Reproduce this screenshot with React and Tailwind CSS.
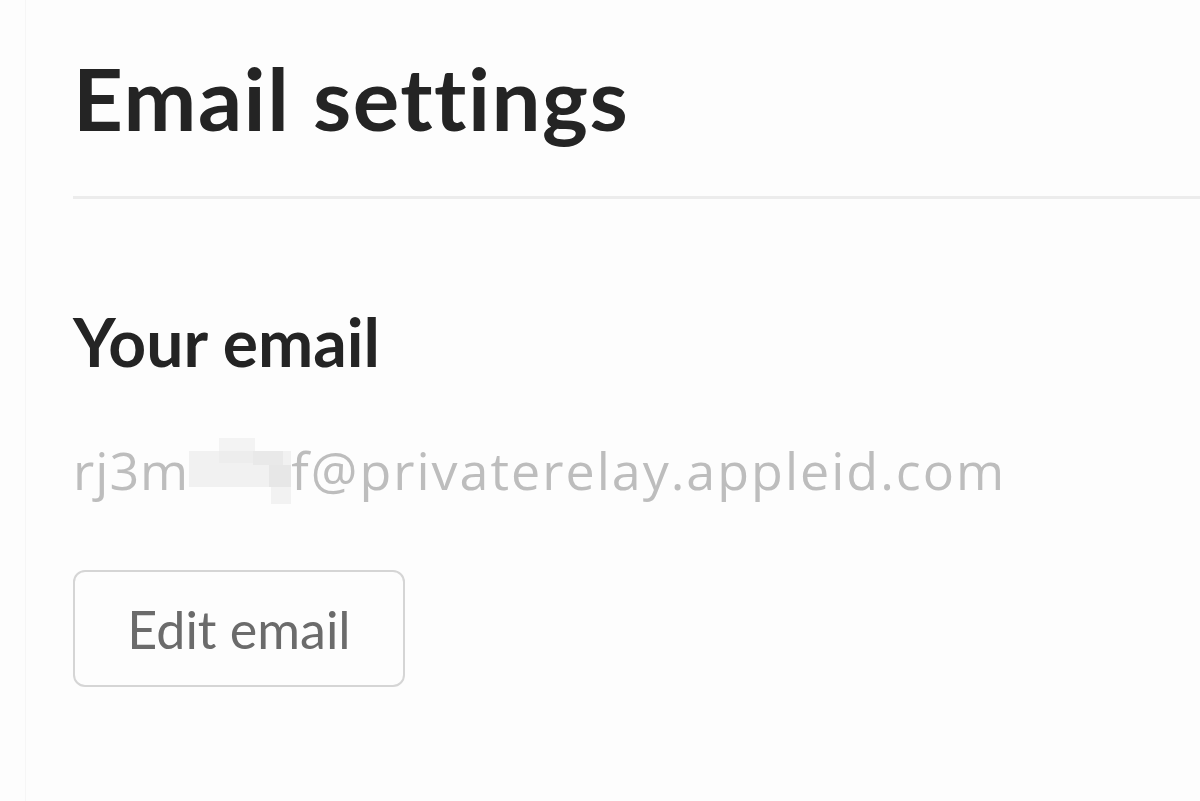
function Pixelated() {
  return (
    <svg width="102" height="66" viewBox="0 0 102 66" className="shrink-0 self-start mt-[0px]">
      <rect x="0" y="13" width="102" height="36" fill="#f1f1f1" />
      <rect x="30" y="0" width="36" height="14" fill="#f3f3f3" />
      <rect x="30" y="13" width="36" height="12" fill="#ededed" />
      <rect x="64" y="13" width="30" height="14" fill="#e9e9e9" />
      <rect x="80" y="27" width="22" height="22" fill="#e7e7e7" />
      <rect x="82" y="49" width="20" height="17" fill="#f2f2f2" />
    </svg>
  );
}

export default function App() {
  return (
    <div className="w-[1200px] h-[801px] bg-[#fdfdfd] overflow-hidden flex" style={{ fontFamily: "Lato, 'Liberation Sans', sans-serif" }}>
      <div className="w-[26px] shrink-0 border-r border-[#f6f6f6]" />
      <div className="flex-1 flex flex-col pl-[47px] pt-[48px]">
        <h1 className="text-[87px] leading-[100px] font-bold text-[#242424] tracking-[1.5px]">Email settings</h1>
        <div className="mt-[48px] h-[3px] bg-[#ececec]" />
        <h2 className="mt-[103px] text-[66px] leading-[80px] font-bold text-[#242424]">Your email</h2>
        <div className="mt-[56px] flex items-start text-[52px] leading-[64px] text-[#bdbdbd]" style={{ fontFamily: "'Open Sans', Lato, sans-serif" }}>
          <span className="tracking-[1px]">rj3m</span>
          <Pixelated />
          <span className="tracking-[2px]">f@privaterelay.appleid.com</span>
        </div>
        <button className="mt-[66px] self-start w-[332px] h-[117px] rounded-[12px] border-2 border-[#d5d5d5] text-[52px] text-[#6b6b6b] bg-transparent">
          Edit email
        </button>
      </div>
    </div>
  );
}
